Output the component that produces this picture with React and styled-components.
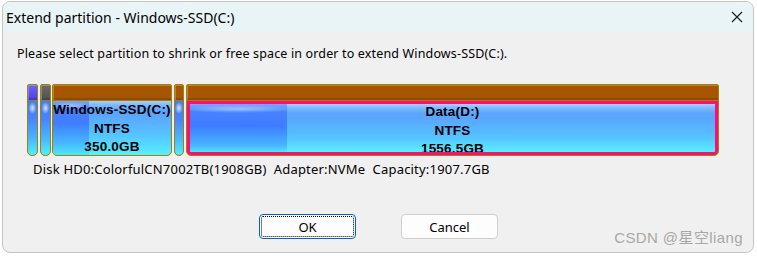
import React from "react"
import styled, { createGlobalStyle } from "styled-components"

const GlobalStyle = createGlobalStyle`
    html, body {
        margin: 0;
        padding: 0;
        background: #ffffff;
        width: 757px;
        height: 257px;
        overflow: hidden;
    }
`

const uiFont = `"Noto Sans", "Liberation Sans", sans-serif`

const Dialog = styled.div`
    position: relative;
    margin: 1px 0 0 2px;
    width: 752px;
    height: 252px;
    box-sizing: border-box;
    border: 1px solid #c4c4c4;
    border-radius: 8px;
    background: #f0f0f0;
    overflow: hidden;
    display: flex;
    flex-direction: column;
    font-family: ${uiFont};
    color: #000;
`

const TitleBar = styled.div`
    height: 30px;
    background: #e9f4f7;
    display: flex;
    align-items: center;
    justify-content: space-between;
    padding: 0 10px 0 3px;
    font-size: 14px;
`

const Close = styled.div`
    width: 12px;
    height: 12px;
    display: flex;
    margin-top: -1px;
`

const Body = styled.div`
    flex: 1;
    display: flex;
    flex-direction: column;
    padding: 14px 0 0 14px;
`

const Prompt = styled.div`
    font-size: 12.5px;
    line-height: 16px;
    letter-spacing: 0.15px;
`

const Bar = styled.div`
    display: flex;
    margin: 22px 0 0 10px;
    height: 72px;
`

const Segment = styled.div`
    width: ${p => p.w}px;
    margin-right: ${p => p.gap}px;
    box-sizing: border-box;
    border: 1px solid #a08400;
    border-radius: 2px 2px 5px 5px;
    display: flex;
    flex-direction: column;
    overflow: hidden;
    background: #a08400;
`

const Top = styled.div`
    height: 15px;
    flex: none;
    border-bottom: 1px solid #a08400;
    background: ${p => p.color};
    box-shadow: inset 1px 1px 0 rgba(255, 255, 255, 0.25), inset 0 -2px 0 rgba(0, 0, 0, 0.12);
`

const Fill = styled.div`
    flex: 1;
    position: relative;
    display: flex;
    border-radius: 0 0 4px 4px;
    overflow: hidden;
    background:
        linear-gradient(to bottom, rgba(255, 255, 255, 0.45) 0px, rgba(255, 255, 255, 0.2) 4px, rgba(255, 255, 255, 0) 9px),
        linear-gradient(to bottom, #62a8ff 0px, #5aa6ff 14px, #55c4ff 34px, #58f0ff 100%);
    border: ${p => p.selected ? "3px solid #ff0c78" : "none"};
`

const Used = styled.div`
    flex: none;
    background:
        radial-gradient(ellipse 60% 4px at 50% 5px, rgba(255, 255, 255, 0.45), rgba(255, 255, 255, 0) 100%),
        linear-gradient(to bottom, #7aa6ff 0px, #4782ff 7px, #3f7cff 22px, #47b8ff 42px, #4ce8ff 100%);
`

const Slim = styled(Fill)`
    background:
        radial-gradient(ellipse 4px 6px at 50% 7px, rgba(255, 255, 255, 0.8), rgba(255, 255, 255, 0) 100%),
        linear-gradient(to bottom, #3f7cff 0px, #4784ff 18px, #47b8ff 38px, #50f0ff 100%);
`

const Labels = styled.div`
    position: absolute;
    inset: ${p => p.selected ? "-1px 0 0 0" : "0"};
    display: flex;
    flex-direction: column;
    align-items: center;
    font-family: "Liberation Sans", Arial, sans-serif;
    font-weight: bold;
    font-size: 13.5px;
    line-height: 18.5px;
    letter-spacing: 0.2px;
    color: #000;
`

const DiskInfo = styled.div`
    margin: 5px 0 0 16px;
    font-size: 13px;
    line-height: 16px;
    letter-spacing: 0.2px;
    white-space: pre;
`

const Buttons = styled.div`
    display: flex;
    gap: 45px;
    margin: 37px 0 0 242px;
`

const Button = styled.div`
    width: 97px;
    height: 25px;
    box-sizing: border-box;
    border: 1px solid ${p => p.primary ? "#0067c0" : "#cfcfcf"};
    border-radius: 4px;
    background: #fdfdfd;
    display: flex;
    align-items: center;
    justify-content: center;
    font-size: 13px;
    position: relative;
    &::after {
        content: "";
        display: ${p => p.primary ? "block" : "none"};
        position: absolute;
        inset: 1px;
        border: 1px dotted #000;
        border-radius: 2px;
    }
`

const Watermark = styled.div`
    position: absolute;
    right: 10px;
    bottom: 5px;
    font-family: "Liberation Sans", "Noto Sans CJK SC", sans-serif;
    font-size: 15px;
    color: #a8a8a8;
    letter-spacing: 0.4px;
`

function Partition({ w, gap, top, label, used, selected }) {
    return (
        <Segment w={w} gap={gap}>
            <Top color={top} />
            {label ? (
                <Fill selected={selected}>
                    <Used style={{ width: used }} />
                    <Labels selected={selected}>
                        {label.map(line => <span key={line}>{line}</span>)}
                    </Labels>
                </Fill>
            ) : (
                <Slim />
            )}
        </Segment>
    )
}

const partitions = [
    { w: 11, gap: 2, top: "linear-gradient(#6a62ff, #4a40e8)" },
    { w: 11, gap: 1, top: "linear-gradient(#6a6a6a, #505050)" },
    { w: 120, gap: 2, top: "#a65500", label: ["Windows-SSD(C:)", "NTFS", "350.0GB"], used: 36 },
    { w: 10, gap: 2, top: "#a65500" },
    { w: 533, gap: 0, top: "#a65500", label: ["Data(D:)", "NTFS", "1556.5GB"], used: 97, selected: true },
]

export default function App() {
    return (
        <>
            <GlobalStyle />
            <Dialog>
                <TitleBar>
                    <span>Extend partition - Windows-SSD(C:)</span>
                    <Close>
                        <svg width="12" height="12" viewBox="0 0 12 12">
                            <path d="M1 1 L11 11 M11 1 L1 11" stroke="#1a1a1a" strokeWidth="1.1" />
                        </svg>
                    </Close>
                </TitleBar>
                <Body>
                    <Prompt>Please select partition to shrink or free space in order to extend Windows-SSD(C:).</Prompt>
                    <Bar>
                        {partitions.map((p, i) => <Partition key={i} {...p} />)}
                    </Bar>
                    <DiskInfo>{"Disk HD0:ColorfulCN7002TB(1908GB)  Adapter:NVMe  Capacity:1907.7GB"}</DiskInfo>
                    <Buttons>
                        <Button primary>OK</Button>
                        <Button>Cancel</Button>
                    </Buttons>
                </Body>
                <Watermark>CSDN @星空liang</Watermark>
            </Dialog>
        </>
    )
}
